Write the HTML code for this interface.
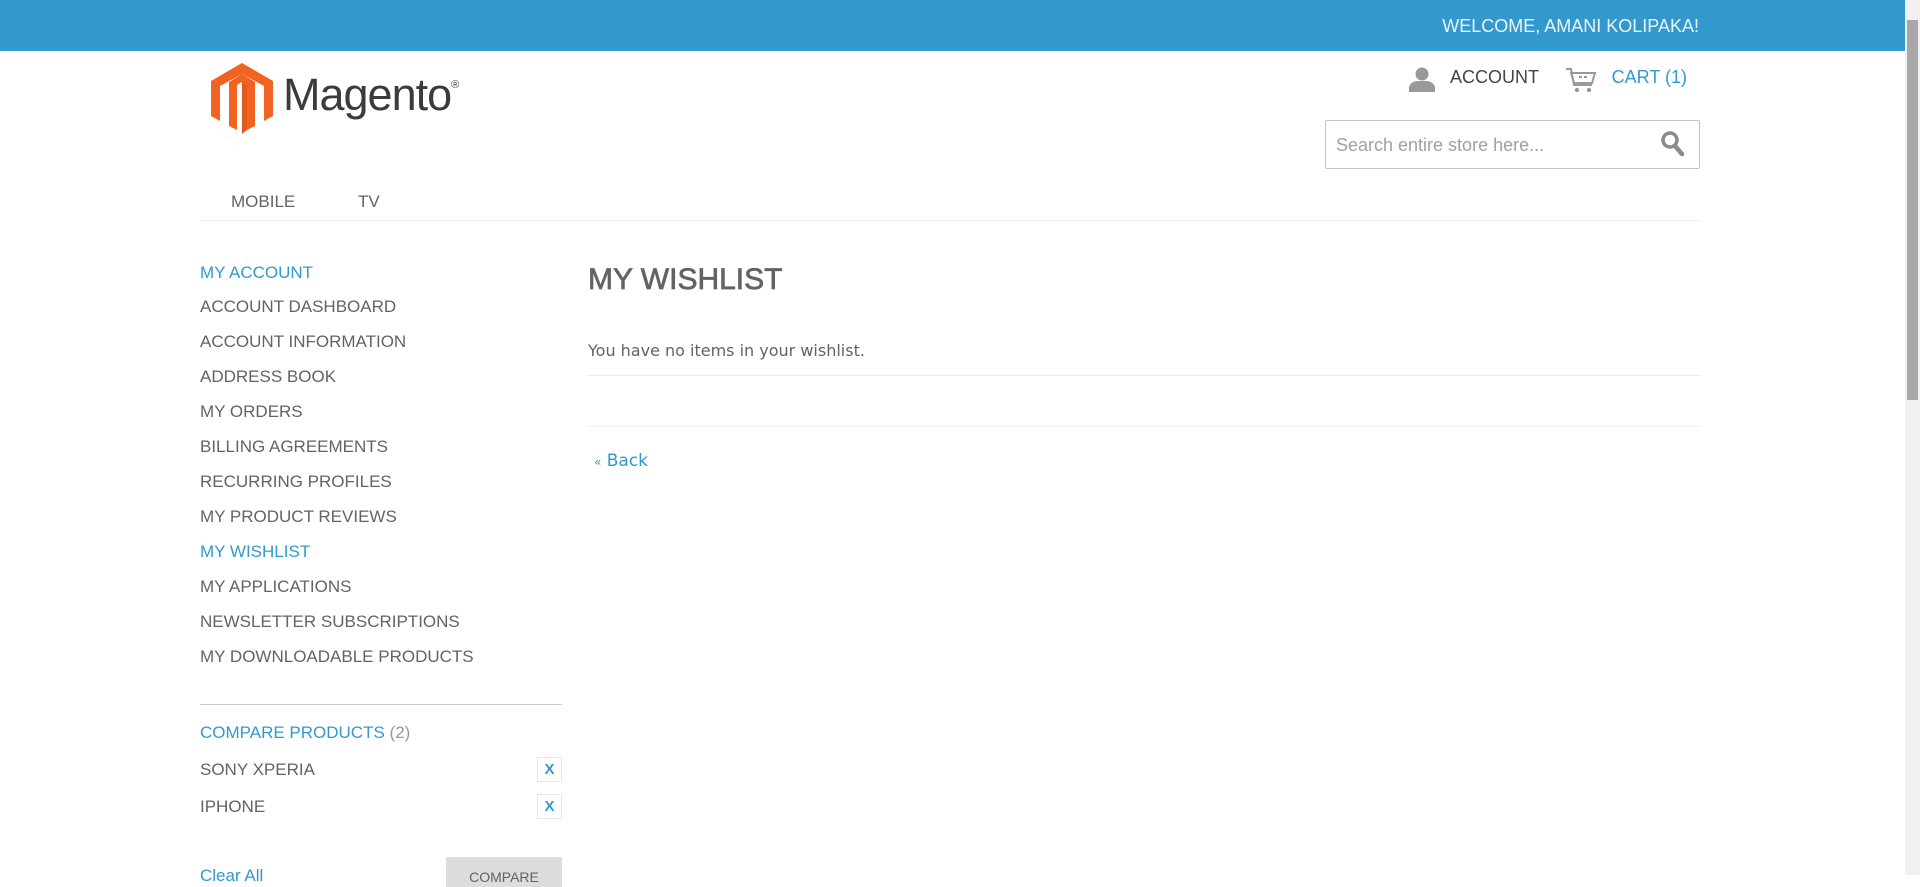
<!DOCTYPE html>
<html><head><meta charset="utf-8"><style>
*{margin:0;padding:0;box-sizing:border-box}
body{width:1920px;height:875px;overflow:hidden;background:#fff;font-family:"Liberation Sans",sans-serif;color:#636363;position:relative}
.a{position:absolute;white-space:nowrap}
.top{position:absolute;left:0;top:0;width:1905px;height:51px;background:#3399cc}
.sb{position:absolute;right:0;top:0;width:15px;height:875px;background:#f1f1f1}
.sb div{position:absolute;left:2px;top:20px;width:11px;height:380px;background:#a8a8a8}
.side{font-size:17px;left:200px}
.blue{color:#3399cc}
.x{position:absolute;left:537px;width:25px;height:25px;border:1px solid #e6e6e6;color:#3399cc;font-size:15px;font-weight:bold;text-align:center;line-height:23px}
</style></head><body>
<div class="top"></div>
<div class="a" style="right:221px;top:16px;font-size:18px;color:#eaf4fa">WELCOME, AMANI KOLIPAKA!</div>
<div class="sb"><div></div></div>

<svg class="a" style="left:211px;top:63px" width="62" height="71" viewBox="0 0 62 71">
<path d="M31 0 L62 18 L62 53 L53 58 L53 23 L31 11 L9 23 L9 58 L0 53 L0 18 Z" fill="#f26322"/>
<path d="M31 11 L44 19 L44 63 L36 67 L36 22 L31 19 L26 22 L26 67 L18 63 L18 19 Z" fill="#f26322"/>
<path d="M36 22 L36 67 L31 71 L31 19Z" fill="#e05a1a"/>
</svg>
<div class="a" style="left:283px;top:69px;font-size:45px;color:#3b3b3b;letter-spacing:-1px">Magento<sup style="font-size:11px;vertical-align:22px">®</sup></div>

<svg class="a" style="left:1409px;top:67px" width="26" height="25" viewBox="0 0 26 25"><circle cx="13" cy="7" r="6.5" fill="#999"/><path d="M0 25 L0 20 Q2 14 9 14 L17 14 Q24 14 26 20 L26 25Z" fill="#999"/></svg>
<div class="a" style="left:1450px;top:67px;font-size:18px;color:#444">ACCOUNT</div>
<svg class="a" style="left:1565px;top:67px" width="32" height="26" viewBox="0 0 32 26"><path d="M1 2 L6 2 L9 18 L27 18" fill="none" stroke="#999" stroke-width="2"/><path d="M6 6 L30 6 L27 16 L9 16Z" fill="none" stroke="#999" stroke-width="2"/><rect x="14" y="9" width="3" height="2" fill="#999"/><rect x="19" y="9" width="3" height="2" fill="#999"/><circle cx="12" cy="23" r="2.2" fill="#999"/><circle cx="24" cy="23" r="2.2" fill="#999"/></svg>
<div class="a blue" style="right:233px;top:67px;font-size:18px">CART (1)</div>

<div class="a" style="left:1325px;top:120px;width:375px;height:49px;border:1px solid #c2c2c2;border-radius:2px"></div>
<div class="a" style="left:1336px;top:135px;font-size:18px;color:#a0a0a0">Search entire store here...</div>
<svg class="a" style="left:1661px;top:131px" width="24" height="26" viewBox="0 0 24 26"><circle cx="9" cy="9" r="7" fill="none" stroke="#8a8a8a" stroke-width="3.5"/><path d="M14 15 L21 23" stroke="#8a8a8a" stroke-width="4.5" stroke-linecap="round"/></svg>

<div class="a" style="left:231px;top:192px;font-size:17px">MOBILE</div>
<div class="a" style="left:358px;top:192px;font-size:17px">TV</div>
<div class="a" style="left:200px;top:220px;width:1500px;height:1px;background:#ededed"></div>

<div class="a side blue" style="top:263px">MY ACCOUNT</div>
<div class="a side" style="top:297px">ACCOUNT DASHBOARD</div>
<div class="a side" style="top:332px">ACCOUNT INFORMATION</div>
<div class="a side" style="top:367px">ADDRESS BOOK</div>
<div class="a side" style="top:402px">MY ORDERS</div>
<div class="a side" style="top:437px">BILLING AGREEMENTS</div>
<div class="a side" style="top:472px">RECURRING PROFILES</div>
<div class="a side" style="top:507px">MY PRODUCT REVIEWS</div>
<div class="a side blue" style="top:542px">MY WISHLIST</div>
<div class="a side" style="top:577px">MY APPLICATIONS</div>
<div class="a side" style="top:612px">NEWSLETTER SUBSCRIPTIONS</div>
<div class="a side" style="top:647px">MY DOWNLOADABLE PRODUCTS</div>

<div class="a" style="left:200px;top:704px;width:362px;height:1px;background:#cccccc"></div>
<div class="a side blue" style="top:723px">COMPARE PRODUCTS <span style="color:#999">(2)</span></div>
<div class="a side" style="top:760px;font-size:17px">SONY XPERIA</div>
<div class="x" style="top:757px">X</div>
<div class="a side" style="top:797px;font-size:17px">IPHONE</div>
<div class="x" style="top:794px">X</div>
<div class="a side blue" style="top:866px">Clear All</div>
<div class="a" style="left:446px;top:857px;width:116px;height:30px;background:#dddddd;color:#636363;font-size:14px;text-align:center;padding-top:12px">COMPARE</div>

<div class="a" style="left:588px;top:263px;font-size:30px;color:#636363;-webkit-text-stroke:0.7px #636363">MY WISHLIST</div>
<div class="a" style="left:588px;top:341px;font-size:16px;font-family:'DejaVu Sans',sans-serif;color:#636363">You have no items in your wishlist.</div>
<div class="a" style="left:588px;top:375px;width:1112px;height:1px;background:#ededed"></div>
<div class="a" style="left:588px;top:426px;width:1112px;height:1px;background:#ededed"></div>
<div class="a blue" style="left:594px;top:451px;font-size:17px;font-family:'DejaVu Sans',sans-serif"><span style="font-size:12px">«</span> Back</div>
</body></html>
